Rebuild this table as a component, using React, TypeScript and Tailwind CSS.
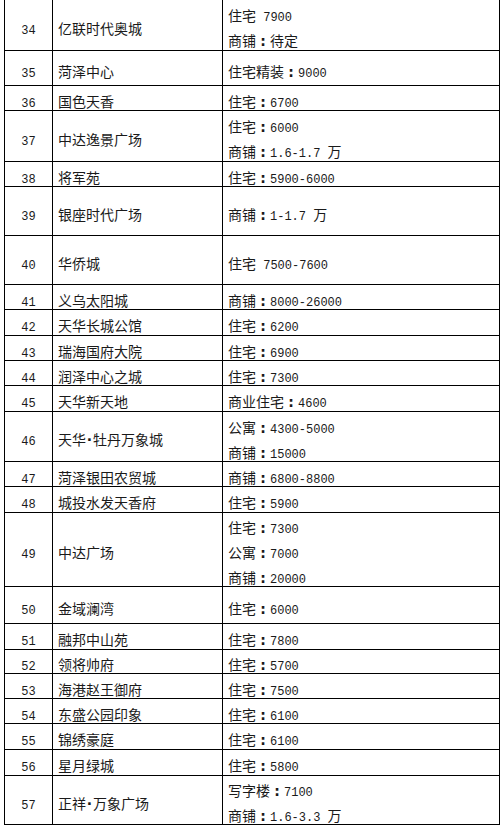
import React from "react";

type Row = { no: string; name: string; prices: string[]; h: number };

const rows: Row[] = [
  { no: "34", name: "亿联时代奥城", prices: ["住宅 7900", "商铺：待定"], h: 51 },
  { no: "35", name: "菏泽中心", prices: ["住宅精装：9000"], h: 35 },
  { no: "36", name: "国色天香", prices: ["住宅：6700"], h: 25 },
  { no: "37", name: "中达逸景广场", prices: ["住宅：6000", "商铺：1.6-1.7 万"], h: 51 },
  { no: "38", name: "将军苑", prices: ["住宅：5900-6000"], h: 25 },
  { no: "39", name: "银座时代广场", prices: ["商铺：1-1.7 万"], h: 49 },
  { no: "40", name: "华侨城", prices: ["住宅 7500-7600"], h: 49 },
  { no: "41", name: "义乌太阳城", prices: ["商铺：8000-26000"], h: 25 },
  { no: "42", name: "天华长城公馆", prices: ["住宅：6200"], h: 26 },
  { no: "43", name: "瑞海国府大院", prices: ["住宅：6900"], h: 25 },
  { no: "44", name: "润泽中心之城", prices: ["住宅：7300"], h: 25 },
  { no: "45", name: "天华新天地", prices: ["商业住宅：4600"], h: 26 },
  { no: "46", name: "天华·牡丹万象城", prices: ["公寓：4300-5000", "商铺：15000"], h: 50 },
  { no: "47", name: "菏泽银田农贸城", prices: ["商铺：6800-8800"], h: 25 },
  { no: "48", name: "城投水发天香府", prices: ["住宅：5900"], h: 26 },
  { no: "49", name: "中达广场", prices: ["住宅：7300", "公寓：7000", "商铺：20000"], h: 74 },
  { no: "50", name: "金域澜湾", prices: ["住宅：6000"], h: 37 },
  { no: "51", name: "融邦中山苑", prices: ["住宅：7800"], h: 26 },
  { no: "52", name: "领将帅府", prices: ["住宅：5700"], h: 24 },
  { no: "53", name: "海港赵王御府", prices: ["住宅：7500"], h: 25 },
  { no: "54", name: "东盛公园印象", prices: ["住宅：6100"], h: 25 },
  { no: "55", name: "锦绣豪庭", prices: ["住宅：6100"], h: 26 },
  { no: "56", name: "星月绿城", prices: ["住宅：5800"], h: 26 },
  { no: "57", name: "正祥·万象广场", prices: ["写字楼：7100", "商铺：1.6-3.3 万"], h: 49 },
];

function Txt({ s }: { s: string }) {
  const parts = s.split(/([\x20-\x7e]+|：|·)/).filter((p) => p.length > 0);
  return (
    <>
      {parts.map((p, i) => {
        if (p === "：") {
          return (
            <span key={i} className="inline-block w-[14px] text-center font-bold leading-none [font-family:'DejaVu_Sans',sans-serif]">
              :
            </span>
          );
        }
        if (p === "·") {
          return (
            <span key={i} className="inline-block w-[7px] text-center font-bold leading-none [font-family:'DejaVu_Sans',sans-serif]">
              ·
            </span>
          );
        }
        if (/^[\x20-\x7e]+$/.test(p)) {
          return (
            <span key={i} className="whitespace-pre text-[12px] leading-none [font-family:'Liberation_Mono',monospace]">
              {p}
            </span>
          );
        }
        return (
          <span key={i} className="leading-none">
            {p}
          </span>
        );
      })}
    </>
  );
}

export default function App() {
  return (
    <div className="min-h-[826px] w-[504px] bg-white">
      <div className="ml-[4px] w-[496px] border-l border-black text-[14px] text-[#1a1a1a] [font-family:'Noto_Sans_CJK_SC',sans-serif]">
        {rows.map((r) => (
          <div key={r.no} className="grid grid-cols-[48px_170px_277px] grid-rows-1" style={{ height: r.h }}>
            <div className="flex min-h-0 flex-col items-center justify-center border-b border-r border-black pt-[6px]">
              <div className="h-[25px] leading-[25px]">
                <Txt s={r.no} />
              </div>
            </div>
            <div className="flex min-h-0 flex-col justify-center border-b border-r border-black pl-[5px] pt-[6px]">
              <div className="h-[25px] whitespace-nowrap leading-[25px]">
                <Txt s={r.name} />
              </div>
            </div>
            <div className="flex min-h-0 flex-col justify-center border-b border-r border-black pl-[5px] pt-[6px]">
              {r.prices.map((p, i) => (
                <div key={i} className="h-[25px] whitespace-nowrap leading-[25px]">
                  <Txt s={p} />
                </div>
              ))}
            </div>
          </div>
        ))}
      </div>
    </div>
  );
}
